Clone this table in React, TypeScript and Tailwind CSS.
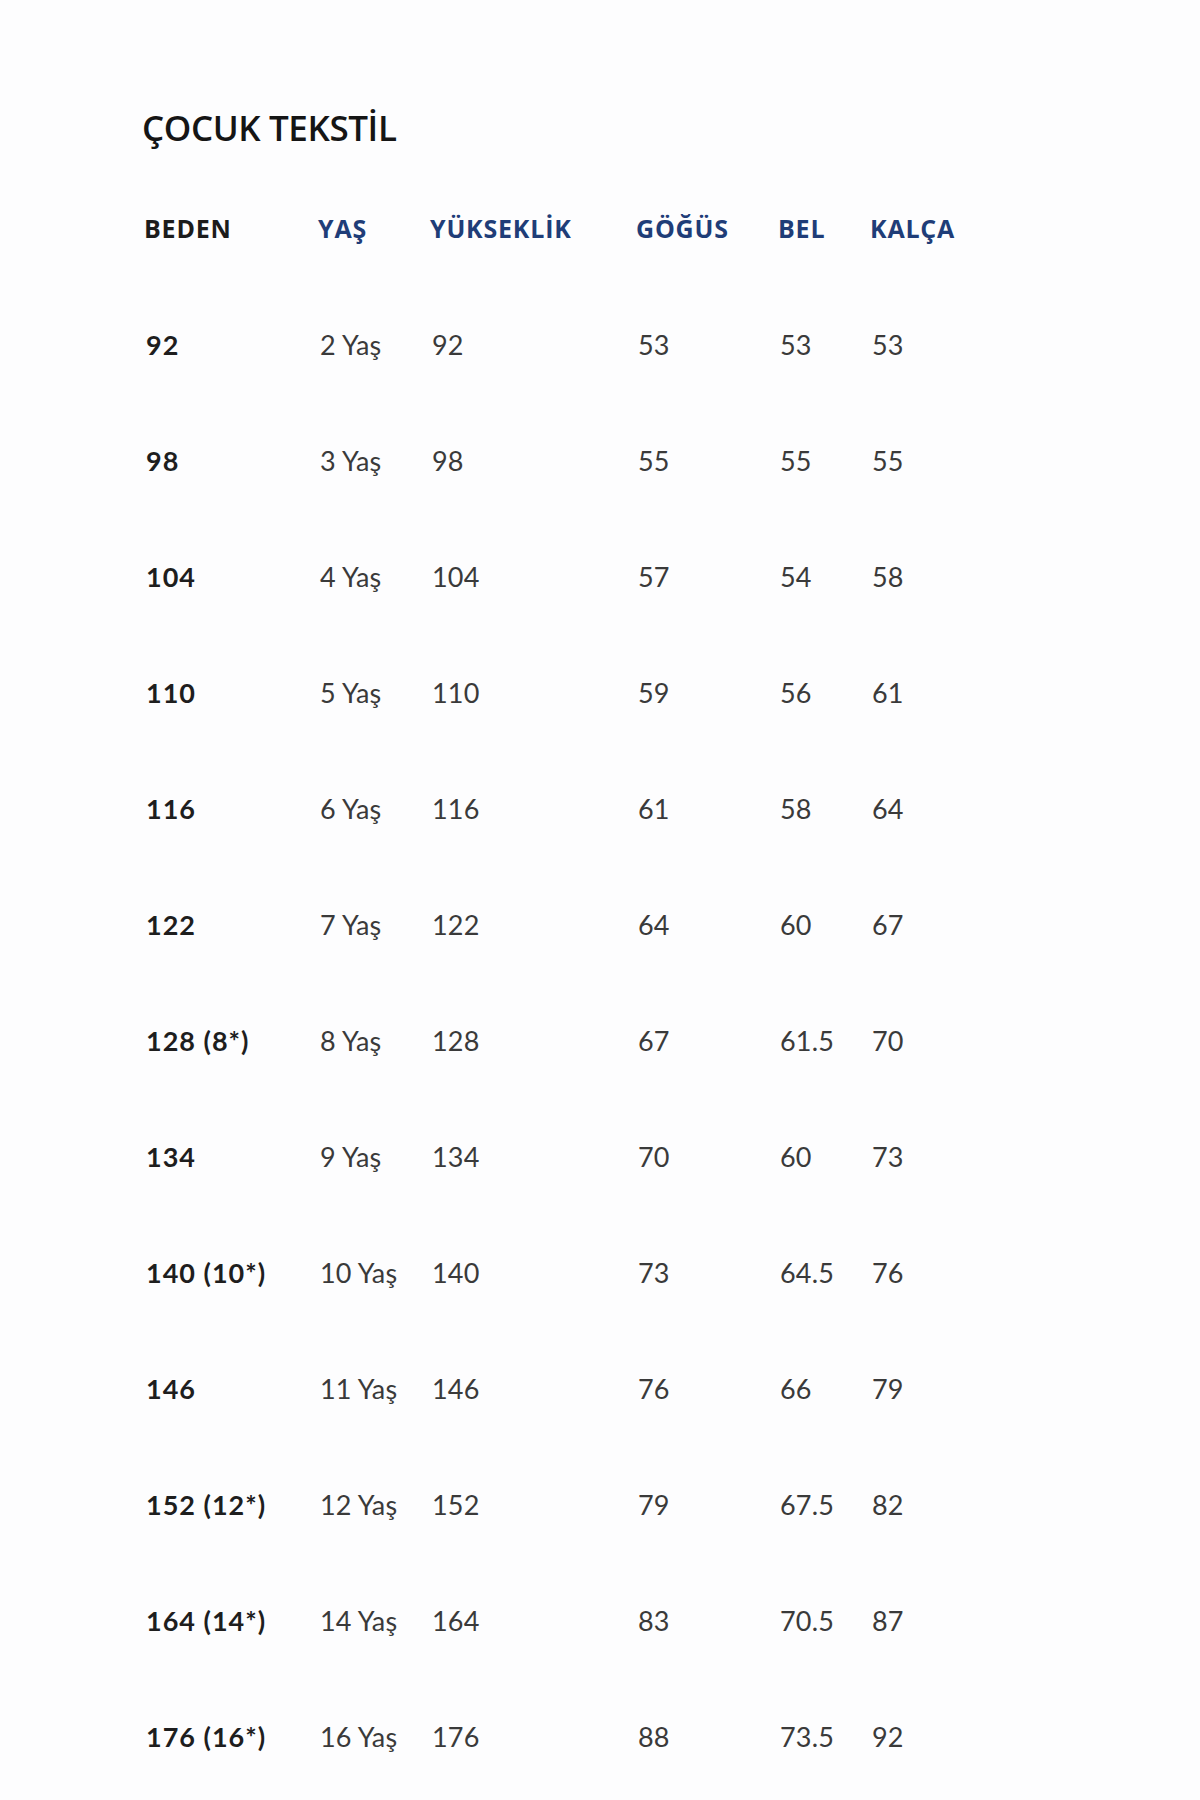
import React from 'react';

const HEADERS = ['BEDEN', 'YAŞ', 'YÜKSEKLİK', 'GÖĞÜS', 'BEL', 'KALÇA'];

const ROWS = [
  ['92', '2 Yaş', '92', '53', '53', '53'],
  ['98', '3 Yaş', '98', '55', '55', '55'],
  ['104', '4 Yaş', '104', '57', '54', '58'],
  ['110', '5 Yaş', '110', '59', '56', '61'],
  ['116', '6 Yaş', '116', '61', '58', '64'],
  ['122', '7 Yaş', '122', '64', '60', '67'],
  ['128 (8*)', '8 Yaş', '128', '67', '61.5', '70'],
  ['134', '9 Yaş', '134', '70', '60', '73'],
  ['140 (10*)', '10 Yaş', '140', '73', '64.5', '76'],
  ['146', '11 Yaş', '146', '76', '66', '79'],
  ['152 (12*)', '12 Yaş', '152', '79', '67.5', '82'],
  ['164 (14*)', '14 Yaş', '164', '83', '70.5', '87'],
  ['176 (16*)', '16 Yaş', '176', '88', '73.5', '92'],
];

const GRID = 'grid grid-cols-[174px_112px_206px_142px_92px_1fr] h-[116px] items-center';

const App: React.FC = () => {
  return (
    <div className="w-[1200px] h-[1800px] bg-[#fdfdfe] pl-[146px] pt-[106px] font-['Lato',sans-serif] overflow-hidden">
      <h1 className="text-[35px] leading-[44px] font-semibold text-[#151515] -ml-[4px] font-['Open_Sans',sans-serif] tracking-[-0.4px]">
        ÇOCUK TEKSTİL
      </h1>

      {/* header row */}
      <div className={`${GRID} mt-[21px]`}>
        {HEADERS.map((h, i) => (
          <span
            key={h}
            className={`text-[25px] font-bold tracking-[0.8px] font-['Open_Sans',sans-serif] -ml-[2px] ${i === 0 ? 'text-[#1c1c1c]' : 'text-[#1f3d78]'}`}
          >
            {h}
          </span>
        ))}
      </div>

      {/* size rows */}
      {ROWS.map((row) => (
        <div key={row[0]} className={GRID}>
          {row.map((cell, i) => (
            <span
              key={i}
              className={
                i === 0
                  ? 'text-[27px] font-bold tracking-[1px] text-[#1e1e1e]'
                  : 'text-[27px] font-normal tracking-[0.2px] text-[#3a3a3a]'
              }
            >
              {cell}
            </span>
          ))}
        </div>
      ))}
    </div>
  );
};

export default App;
